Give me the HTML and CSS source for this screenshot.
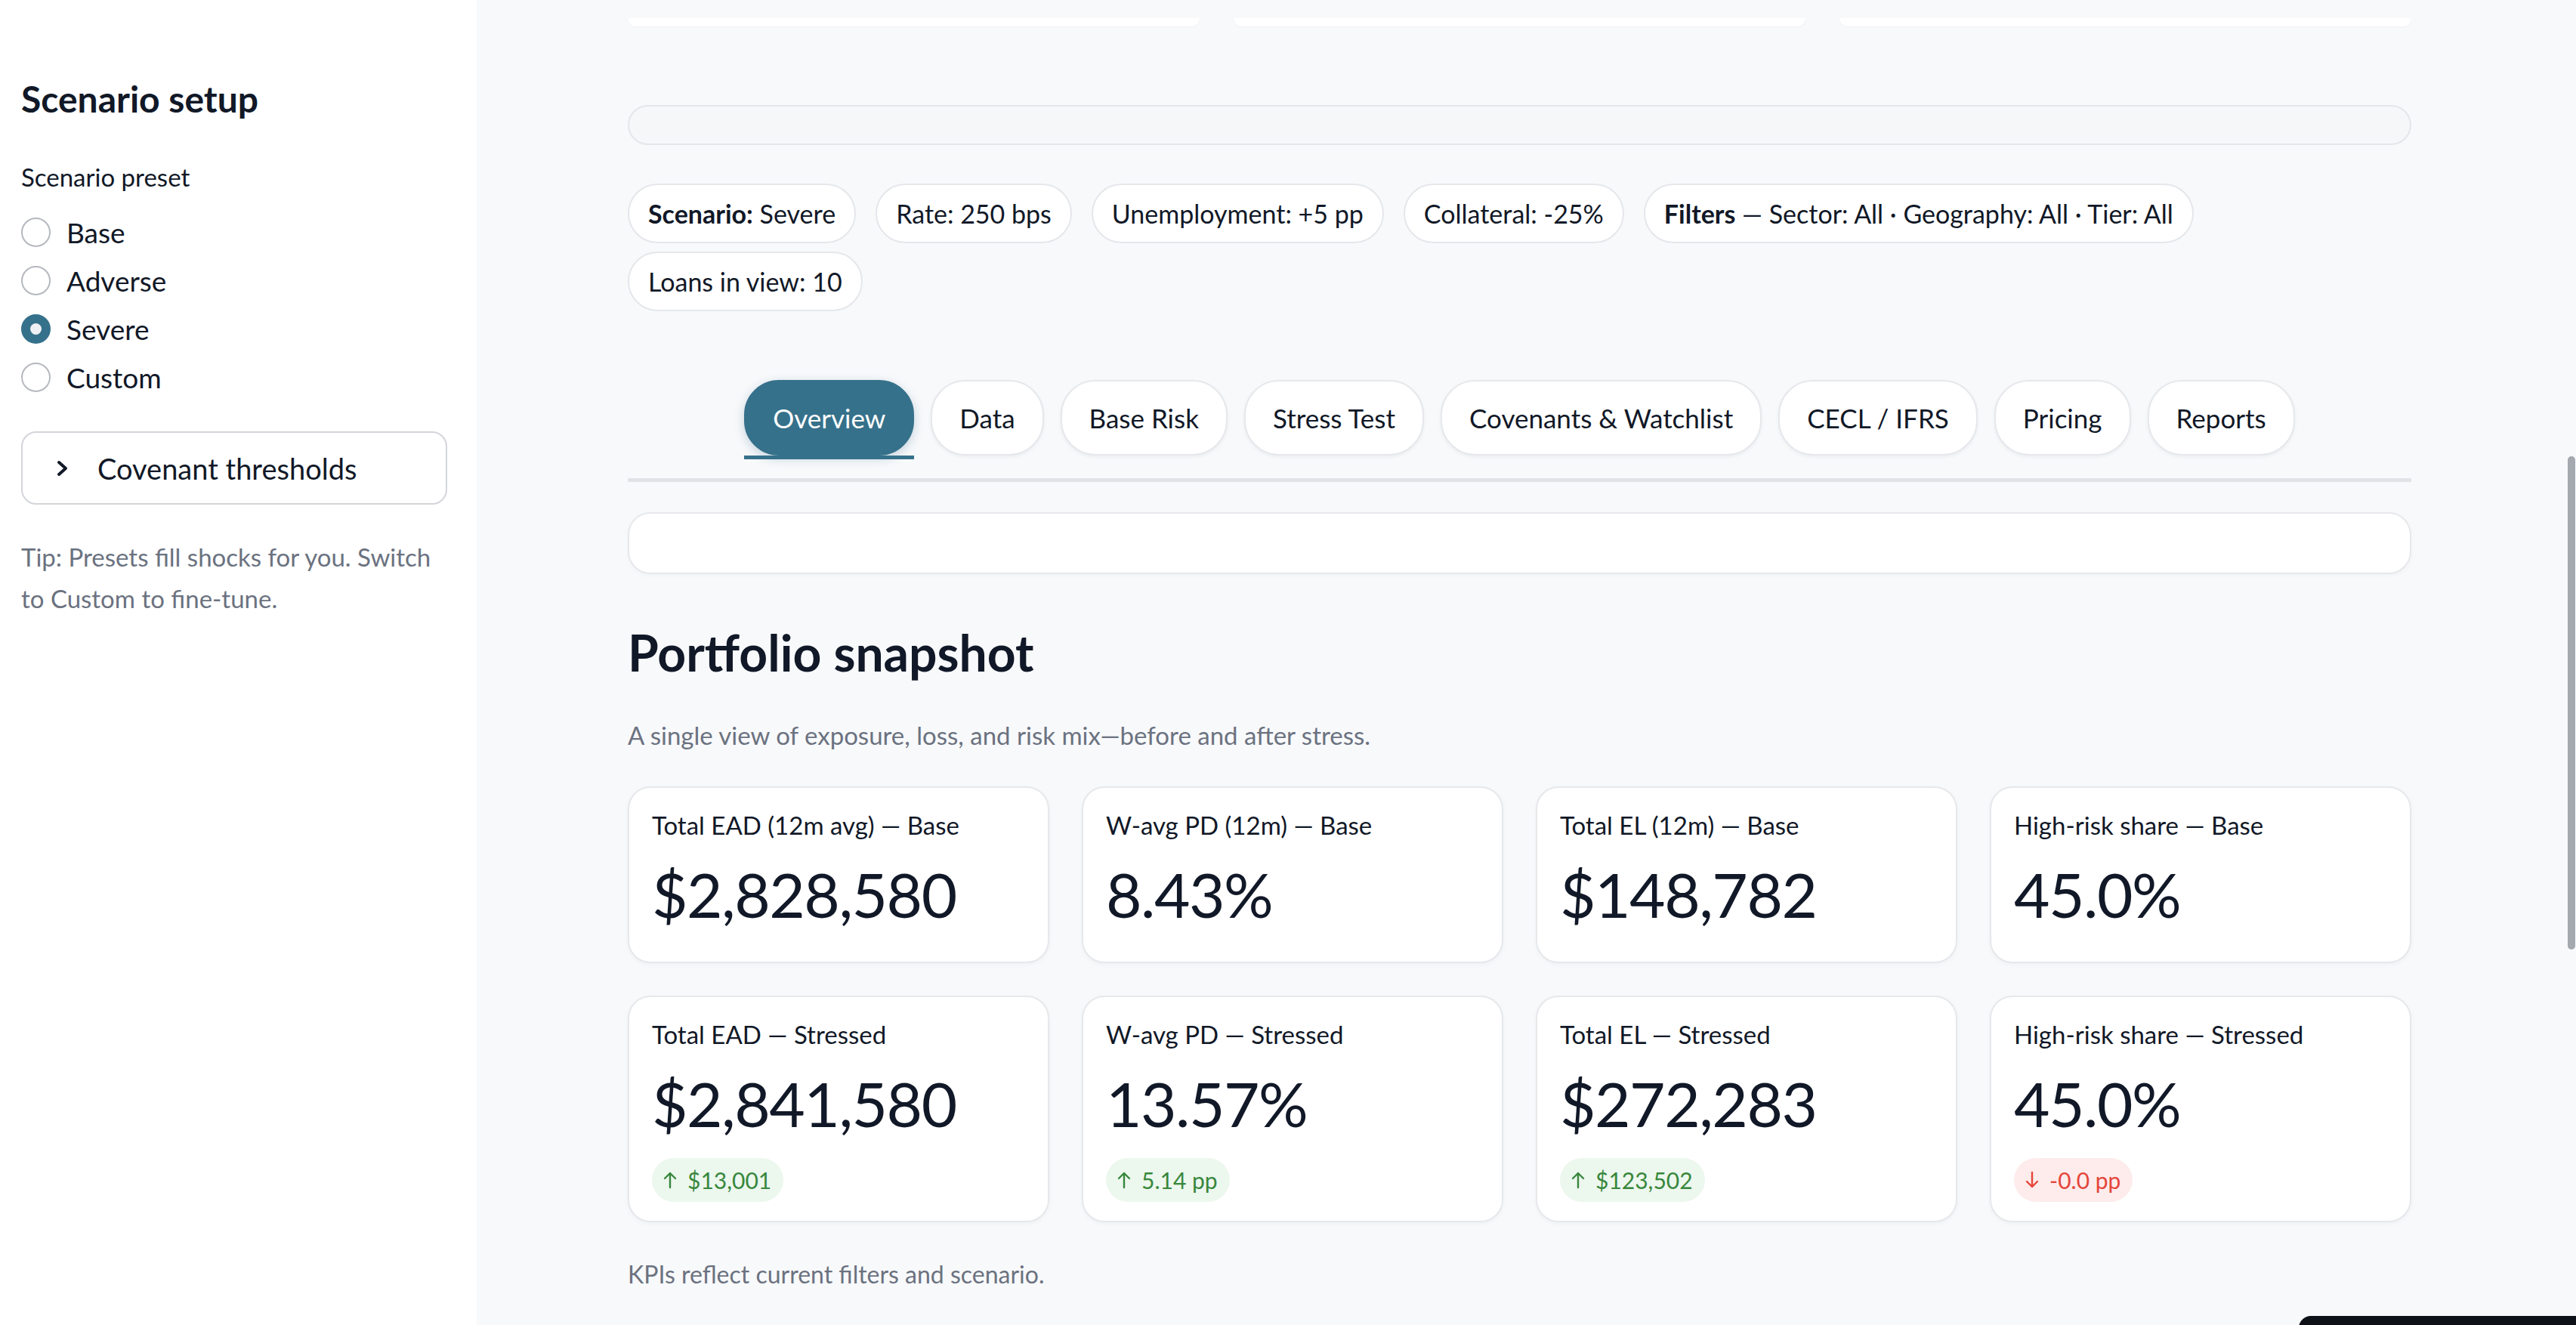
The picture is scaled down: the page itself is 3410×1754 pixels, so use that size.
FILE: index.html
```html
<!DOCTYPE html>
<html lang="en">
<head>
<meta charset="utf-8">
<title>Portfolio snapshot</title>
<link rel="stylesheet" href="styles.css">
</head>
<body>
<div class="app">
  <aside class="sidebar">
    <h2 class="sb-title">Scenario setup</h2>
    <div class="sb-label">Scenario preset</div>
    <div class="radios">
      <div class="radio"><span class="radio-dot"></span><span>Base</span></div>
      <div class="radio"><span class="radio-dot"></span><span>Adverse</span></div>
      <div class="radio radio-on"><span class="radio-dot"></span><span>Severe</span></div>
      <div class="radio"><span class="radio-dot"></span><span>Custom</span></div>
    </div>
    <div class="expander">
      <svg class="chev" width="16" height="24" viewBox="0 0 16 24"><polyline points="3,4 12,12 3,20" fill="none" stroke="#111827" stroke-width="4" stroke-linecap="round" stroke-linejoin="round"/></svg>
      <span>Covenant thresholds</span>
    </div>
    <p class="tip">Tip: Presets fill shocks for you. Switch to Custom to fine-tune.</p>
  </aside>

  <main class="main">
    <div class="top-cards"><div class="top-card"></div><div class="top-card"></div><div class="top-card"></div></div>
    <div class="bar"></div>

    <div class="chips">
      <div class="chip-row">
        <span class="chip"><b>Scenario:</b> Severe</span>
        <span class="chip">Rate: 250 bps</span>
        <span class="chip">Unemployment: +5 pp</span>
        <span class="chip">Collateral: -25%</span>
        <span class="chip"><b>Filters</b> — Sector: All · Geography: All · Tier: All</span>
      </div>
      <div class="chip-row">
        <span class="chip">Loans in view: 10</span>
      </div>
    </div>

    <nav class="tabs">
      <span class="tab tab-active">Overview</span>
      <span class="tab">Data</span>
      <span class="tab">Base Risk</span>
      <span class="tab">Stress Test</span>
      <span class="tab">Covenants &amp; Watchlist</span>
      <span class="tab">CECL / IFRS</span>
      <span class="tab">Pricing</span>
      <span class="tab">Reports</span>
    </nav>

    <div class="panel"></div>

    <h2 class="section-title">Portfolio snapshot</h2>
    <p class="subtitle">A single view of exposure, loss, and risk mix—before and after stress.</p>

    <div class="kpis">
      <div class="kpi"><div class="kpi-label">Total EAD (12m avg) — Base</div><div class="kpi-value">$2,828,580</div></div>
      <div class="kpi"><div class="kpi-label">W-avg PD (12m) — Base</div><div class="kpi-value">8.43%</div></div>
      <div class="kpi"><div class="kpi-label">Total EL (12m) — Base</div><div class="kpi-value">$148,782</div></div>
      <div class="kpi"><div class="kpi-label">High-risk share — Base</div><div class="kpi-value">45.0%</div></div>

      <div class="kpi kpi-delta"><div class="kpi-label">Total EAD — Stressed</div><div class="kpi-value">$2,841,580</div>
        <span class="delta delta-up"><svg class="arrow" width="18" height="24" viewBox="0 0 18 24"><path d="M9 22V3M2 10l7-7 7 7" fill="none" stroke="currentColor" stroke-width="2.4" stroke-linecap="round" stroke-linejoin="round"/></svg>$13,001</span></div>
      <div class="kpi kpi-delta"><div class="kpi-label">W-avg PD — Stressed</div><div class="kpi-value">13.57%</div>
        <span class="delta delta-up"><svg class="arrow" width="18" height="24" viewBox="0 0 18 24"><path d="M9 22V3M2 10l7-7 7 7" fill="none" stroke="currentColor" stroke-width="2.4" stroke-linecap="round" stroke-linejoin="round"/></svg>5.14 pp</span></div>
      <div class="kpi kpi-delta"><div class="kpi-label">Total EL — Stressed</div><div class="kpi-value">$272,283</div>
        <span class="delta delta-up"><svg class="arrow" width="18" height="24" viewBox="0 0 18 24"><path d="M9 22V3M2 10l7-7 7 7" fill="none" stroke="currentColor" stroke-width="2.4" stroke-linecap="round" stroke-linejoin="round"/></svg>$123,502</span></div>
      <div class="kpi kpi-delta"><div class="kpi-label">High-risk share — Stressed</div><div class="kpi-value">45.0%</div>
        <span class="delta delta-down"><svg class="arrow" width="18" height="24" viewBox="0 0 18 24"><path d="M9 2v19M2 14l7 7 7-7" fill="none" stroke="currentColor" stroke-width="2.4" stroke-linecap="round" stroke-linejoin="round"/></svg>-0.0 pp</span></div>
    </div>

    <p class="note">KPIs reflect current filters and scenario.</p>
  </main>
</div>
<div class="scroll-thumb"></div>
<div class="corner-btn"></div>
</body>
</html>
```

FILE: styles.css
```css
* { box-sizing: border-box; }

html, body {
  margin: 0;
  padding: 0;
  height: 1754px;
  overflow: hidden;
}

body {
  font-family: "Lato", "Liberation Sans", sans-serif;
  color: #111827;
  background: #f8f9fb;
}

.app {
  display: flex;
  height: 1754px;
}

/* ---------- Sidebar ---------- */
.sidebar {
  width: 631px;
  flex: 0 0 631px;
  background: #ffffff;
  padding: 101px 39px 0 28px;
}

.sb-title {
  margin: 0;
  font-size: 48px;
  line-height: 60px;
  font-weight: 700;
  color: #111827;
}

.sb-label {
  margin-top: 52px;
  font-size: 33px;
  line-height: 42px;
  color: #111827;
}

.radios {
  margin-top: 20px;
  display: flex;
  flex-direction: column;
}

.radio {
  height: 64px;
  display: flex;
  align-items: center;
  gap: 21px;
  font-size: 37px;
  color: #111827;
}

.radio-dot {
  width: 39px;
  height: 39px;
  border-radius: 50%;
  border: 2px solid #b5b8be;
  background: #ffffff;
  display: flex;
  align-items: center;
  justify-content: center;
  flex: 0 0 39px;
}

.radio-on .radio-dot {
  border-color: #36718b;
  background: #36718b;
}

.radio-on .radio-dot::before {
  content: "";
  width: 15px;
  height: 15px;
  border-radius: 50%;
  background: #eef0f4;
}

.expander {
  margin-top: 40px;
  height: 97px;
  border: 2px solid #d3d5da;
  border-radius: 20px;
  display: flex;
  align-items: center;
  padding-left: 45px;
  gap: 38px;
  font-size: 38px;
  color: #111827;
}

.chev { flex: 0 0 16px; }

.tip {
  margin: 42px 0 0;
  font-size: 33px;
  line-height: 55px;
  color: #6b7280;
}

/* ---------- Main ---------- */
.main {
  flex: 1 1 auto;
  padding: 24px 218px 0 200px;
  background: #f8f9fb;
}

.top-cards {
  display: grid;
  grid-template-columns: repeat(3, 1fr);
  column-gap: 45px;
}

.top-card {
  height: 11px;
  background: #ffffff;
  border-radius: 0 0 12px 12px;
  box-shadow: 0 1px 2px rgba(15, 23, 42, 0.04);
}

.bar {
  margin-top: 104px;
  height: 53px;
  border: 2px solid #e4e6ea;
  border-radius: 27px;
  background: #f6f7f9;
}

.chips {
  margin-top: 51px;
  display: flex;
  flex-direction: column;
  gap: 11px;
}

.chip-row {
  display: flex;
  gap: 26px;
}

.chip {
  height: 79px;
  display: inline-flex;
  align-items: center;
  padding: 0 25px;
  background: #ffffff;
  border: 2px solid #e5e7eb;
  border-radius: 40px;
  font-size: 34px;
  color: #111827;
  white-space: pre;
}

.chip b { font-weight: 700; }

.tabs {
  margin-top: 91px;
  display: flex;
  justify-content: center;
  gap: 22px;
  padding-bottom: 30px;
  border-bottom: 5px solid #e1e3e7;
}

.tab {
  position: relative;
  height: 100px;
  display: inline-flex;
  align-items: center;
  padding: 0 36px;
  background: #ffffff;
  border: 2px solid #e6e8eb;
  border-radius: 46px;
  font-size: 35px;
  color: #111827;
  box-shadow: 0 2px 5px rgba(15, 23, 42, 0.05);
}

.tab-active {
  background: #36718b;
  border-color: #36718b;
  color: #ffffff;
  box-shadow: 0 4px 14px rgba(54, 113, 139, 0.28);
}

.tab-active::after {
  content: "";
  position: absolute;
  left: -2px;
  right: -2px;
  bottom: -7px;
  height: 5px;
  background: #36718b;
}

.panel {
  margin-top: 40px;
  height: 82px;
  background: #ffffff;
  border: 2px solid #e6e8eb;
  border-radius: 30px;
  box-shadow: 0 2px 6px rgba(15, 23, 42, 0.03);
}

.section-title {
  margin: 66px 0 0;
  font-size: 66px;
  line-height: 76px;
  font-weight: 700;
  color: #111827;
}

.subtitle {
  margin: 50px 0 0;
  font-size: 33px;
  line-height: 42px;
  color: #6b7280;
}

.kpis {
  margin-top: 47px;
  display: grid;
  grid-template-columns: repeat(4, 1fr);
  gap: 43px;
}

.kpi {
  background: #ffffff;
  border: 2px solid #e6e8eb;
  border-radius: 30px;
  padding: 28px 30px 42px;
  box-shadow: 0 2px 6px rgba(15, 23, 42, 0.04);
}

.kpi-delta { padding-bottom: 25px; }

.kpi-label {
  font-size: 33px;
  line-height: 42px;
  color: #111827;
}

.kpi-value {
  margin-top: 22px;
  font-size: 82px;
  line-height: 96px;
  letter-spacing: -1.5px;
  color: #111827;
}

.delta {
  margin-top: 25px;
  height: 58px;
  display: inline-flex;
  align-items: center;
  padding: 0 16px 0 15px;
  border-radius: 29px;
  font-size: 30px;
}

.arrow { margin-right: 14px; flex: 0 0 18px; }

.delta-up {
  background: #ecf7ee;
  color: #38873c;
}

.delta-down {
  background: #fdeceb;
  color: #e5453b;
}

.note {
  margin: 49px 0 0;
  font-size: 32px;
  line-height: 40px;
  color: #6b7280;
}

/* ---------- Overlays ---------- */
.scroll-thumb {
  position: fixed;
  left: 3399px;
  top: 604px;
  width: 10px;
  height: 653px;
  border-radius: 5px;
  background: #a4a8af;
}

.corner-btn {
  position: fixed;
  left: 3043px;
  top: 1742px;
  width: 400px;
  height: 40px;
  border-radius: 16px 0 0 0;
  background: #0e1117;
}
```
